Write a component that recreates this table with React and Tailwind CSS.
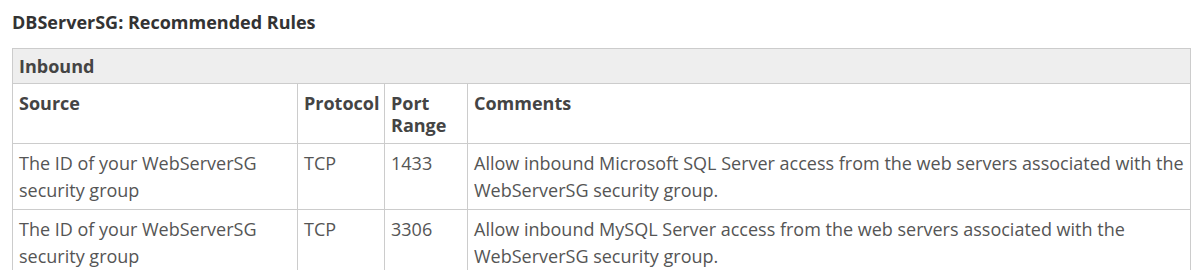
const rules = [
  {
    source: 'The ID of your WebServerSG security group',
    protocol: 'TCP',
    port: '1433',
    comments:
      'Allow inbound Microsoft SQL Server access from the web servers associated with the WebServerSG security group.',
  },
  {
    source: 'The ID of your WebServerSG security group',
    protocol: 'TCP',
    port: '3306',
    comments:
      'Allow inbound MySQL Server access from the web servers associated with the WebServerSG security group.',
  },
]

export default function App() {
  return (
    <div className="bg-white pl-3 pt-[10px] text-[#555] font-['Open_Sans',sans-serif]">
      <p className="text-[18px] font-bold leading-[24px] text-[#333]">DBServerSG: Recommended Rules</p>

      <table className="mt-[14px] w-[1179px] table-fixed border-collapse text-[18px]">
        <colgroup>
          <col className="w-[285px]" />
          <col className="w-[87px]" />
          <col className="w-[83px]" />
          <col />
        </colgroup>
        <thead className="text-[#444]">
          <tr>
            <th colSpan={4} className="border border-[#ccc] bg-[#eee] px-[6px] py-[6px] text-left font-bold leading-[22px]">
              Inbound
            </th>
          </tr>
          <tr>
            <th className="border border-[#ccc] px-[6px] pt-2 pb-[7px] text-left align-top font-bold leading-[22px]">Source</th>
            <th className="border border-[#ccc] px-[6px] pt-2 pb-[7px] text-left align-top font-bold leading-[22px]">Protocol</th>
            <th className="border border-[#ccc] px-[6px] pt-2 pb-[7px] text-left align-top font-bold leading-[22px]">Port Range</th>
            <th className="border border-[#ccc] px-[6px] pt-2 pb-[7px] text-left align-top font-bold leading-[22px]">Comments</th>
          </tr>
        </thead>
        <tbody>
          {rules.map((r) => (
            <tr key={r.port}>
              <td className="border border-[#ccc] px-[6px] pt-[6px] pb-[5px] align-top leading-[27px]">{r.source}</td>
              <td className="border border-[#ccc] px-[6px] pt-[6px] pb-[5px] align-top leading-[27px]">{r.protocol}</td>
              <td className="border border-[#ccc] px-[6px] pt-[6px] pb-[5px] align-top leading-[27px]">{r.port}</td>
              <td className="border border-[#ccc] px-[6px] pt-[6px] pb-[5px] align-top leading-[27px]">{r.comments}</td>
            </tr>
          ))}
        </tbody>
      </table>
    </div>
  )
}
